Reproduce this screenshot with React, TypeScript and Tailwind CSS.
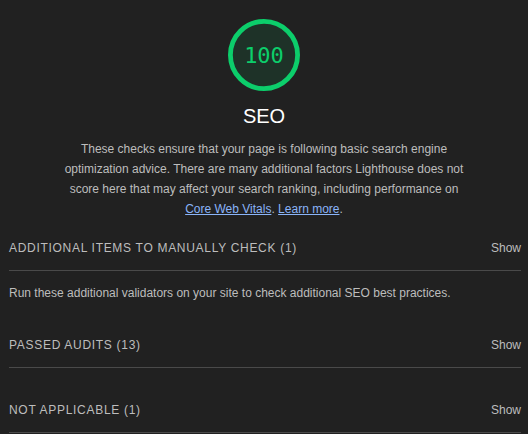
import React from "react";

function Gauge() {
  return (
    <div className="relative w-[72px] h-[72px]">
      <svg viewBox="0 0 120 120" className="absolute inset-0 w-[72px] h-[72px]">
        <circle cx="60" cy="60" r="56" fill="rgba(12,206,107,0.1)" stroke="#0cce6b" strokeWidth="8" />
      </svg>
      <div className="absolute inset-0 flex items-center justify-center text-[#0cce6b] text-[22px]" style={{ fontFamily: '"DejaVu Sans Mono", "Liberation Mono", monospace' }}>
        100
      </div>
    </div>
  );
}

function Group({ title, children }: { title: string; children?: React.ReactNode }) {
  return (
    <div>
      <div className="flex items-center justify-between h-[46px] border-b border-[#4a4a4a]">
        <span className="text-[12px] tracking-[0.7px] text-[#bdbdbd]">{title}</span>
        <span className="text-[12px] text-[#bdbdbd]">Show</span>
      </div>
      {children}
    </div>
  );
}

export default function App() {
  return (
    <div className="w-[528px] h-[434px] bg-[#212121] overflow-hidden" style={{ fontFamily: '"Liberation Sans", Arial, sans-serif' }}>
      <div className="flex flex-col items-center pt-[19px]">
        <Gauge />
        <div className="mt-[13px] text-[20px] leading-[24px] text-white">SEO</div>
        <p className="mt-[11px] w-[410px] text-center text-[12px] leading-[20px] text-[#bdbdbd]">
          These checks ensure that your page is following basic search engine optimization advice. There are many additional factors Lighthouse does not score here that may affect your search ranking, including performance on{" "}
          <span className="text-[#8ab4f8] underline">Core Web Vitals</span>.{" "}
          <span className="text-[#8ab4f8] underline">Learn more</span>.
        </p>
      </div>
      <div className="pl-[9px] pr-[7px] mt-[6px]">
        <Group title="ADDITIONAL ITEMS TO MANUALLY CHECK (1)">
          <div className="text-[12px] text-[#bdbdbd] pt-[15px] pb-[22px] leading-[14px]">
            Run these additional validators on your site to check additional SEO best practices.
          </div>
        </Group>
        <Group title="PASSED AUDITS (13)" />
        <div className="h-[19px]" />
        <Group title="NOT APPLICABLE (1)" />
      </div>
    </div>
  );
}
